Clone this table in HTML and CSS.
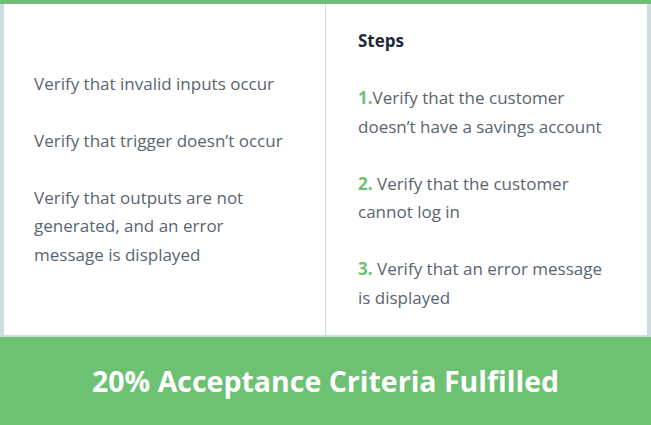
FILE: index.html
```html
<!DOCTYPE html>
<html>
<head>
<meta charset="utf-8">
<link rel="stylesheet" href="styles.css">
</head>
<body>
<div class="topbar"></div>
<div class="card">
  <div class="col col-left">
    <div class="content">
      <p>Verify that invalid inputs occur</p>
      <p>Verify that trigger doesn’t occur</p>
      <p>Verify that outputs are not generated, and an error message is displayed</p>
    </div>
  </div>
  <div class="col col-right">
    <div class="content">
      <h4>Steps</h4>
      <p><span class="num">1.</span>Verify that the customer doesn’t have a savings account</p>
      <p><span class="num">2.</span> Verify that the customer cannot log in</p>
      <p><span class="num">3.</span> Verify that an error message is displayed</p>
    </div>
  </div>
</div>
<div class="footer">20% Acceptance Criteria Fulfilled</div>
</body>
</html>
```
FILE: styles.css
```css
* { box-sizing: border-box; }
html, body {
  margin: 0;
  padding: 0;
}
body {
  width: 651px;
  height: 425px;
  background: #cfdde3;
  font-family: "Open Sans", "Noto Sans", sans-serif;
  display: flex;
  flex-direction: column;
  overflow: hidden;
}
.topbar {
  height: 4px;
  background: #6cc172;
}
.card {
  margin: 0 4px;
  height: 331px;
  background: #ffffff;
  display: flex;
}
.col {
  display: flex;
  align-items: center;
}
.col-left {
  width: 322px;
  flex: none;
  padding: 0 40px 0 30px;
  border-right: 1px solid #cfdde3;
}
.col-right {
  flex: 1;
  padding: 0 38px 0 32px;
}
.content p {
  margin: 0 0 28.5px 0;
  font-size: 17px;
  line-height: 28.5px;
  color: #5a6470;
}
.content p:last-child {
  margin-bottom: 0;
}
.content h4 {
  margin: 0 0 28.5px 0;
  font-size: 17px;
  line-height: 28.5px;
  font-weight: 700;
  color: #1c2a39;
}
.num {
  color: #6cc172;
  font-weight: 700;
}
.footer {
  margin-top: 2px;
  flex: 1;
  background: #6cc172;
  color: #ffffff;
  font-weight: 700;
  font-size: 28.5px;
  display: flex;
  align-items: center;
  justify-content: center;
}
```
